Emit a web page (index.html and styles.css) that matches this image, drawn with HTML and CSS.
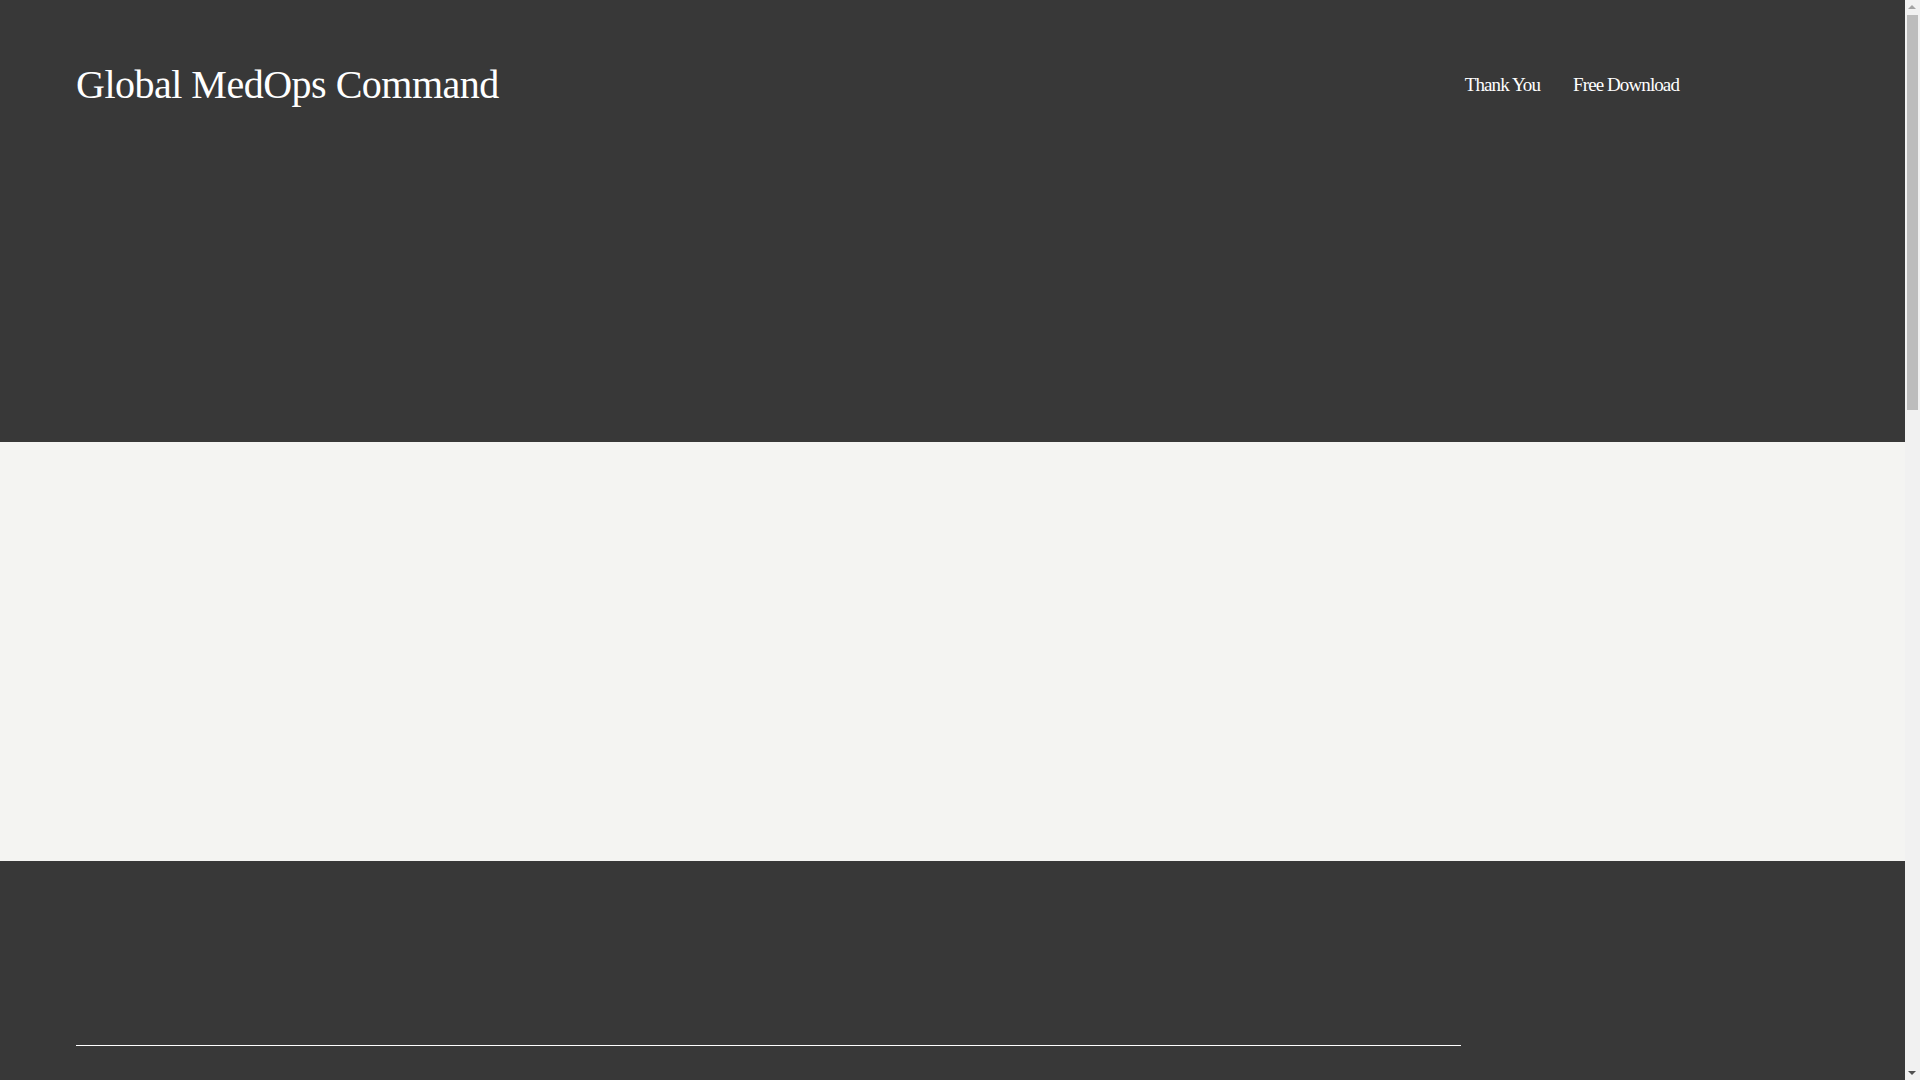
FILE: index.html
```html
<!DOCTYPE html>
<html>
<head>
	<title>Global MedOps Command</title>
	<meta charset="utf-8">
	<link rel="stylesheet" href="styles.css">
</head>
<body>
    <header class="site-header">
        <div class="header-row">
            <a href="#" class="site-title">Global MedOps Command</a>
            <nav class="main-nav">
                <a href="#">Thank You</a>
                <a href="#">Free Download</a>
            </nav>
        </div>
    </header>

    <section class="content-area"></section>

    <footer class="site-footer">
        <div class="footer-inner">
            <hr class="footer-rule">
        </div>
    </footer>

    <!-- page scrollbar as seen in the capture -->
    <div class="fake-scrollbar">
        <span class="arrow-up"></span>
        <div class="thumb"></div>
        <span class="arrow-down"></span>
    </div>
</body>
</html>
```

FILE: styles.css
```css
html, body {
    margin: 0;
    padding: 0;
}
body {
    font-family: "Liberation Serif", "Times New Roman", serif;
    background-color: #383838;
    color: #ffffff;
    margin-right: 15px;
}
.site-header {
    background-color: #383838;
    height: 442px;
    padding: 0 76px;
    box-sizing: border-box;
}
.header-row {
    display: flex;
    align-items: baseline;
    justify-content: space-between;
    padding-top: 61px;
}
.site-title {
    font-size: 40px;
    line-height: 48px;
    color: #ffffff;
    text-decoration: none;
    letter-spacing: -0.5px;
}
.main-nav {
    display: flex;
    gap: 33px;
    margin-right: 150px;
    position: relative;
    top: -7px;
}
.main-nav a {
    font-size: 19px;
    color: #ffffff;
    text-decoration: none;
    letter-spacing: -0.9px;
}
.content-area {
    background-color: #f4f4f2;
    height: 419px;
}
.site-footer {
    background-color: #383838;
    height: 2010px;
    padding: 0 76px;
}
.footer-inner {
    width: 1385px;
    padding-top: 184px;
}
.footer-rule {
    border: 0;
    border-top: 1px solid #ffffff;
    margin: 0;
}
.fake-scrollbar {
    position: fixed;
    top: 0;
    right: 0;
    width: 15px;
    height: 100vh;
    background-color: #f1f1f1;
}
.fake-scrollbar .thumb {
    position: absolute;
    top: 15px;
    left: 2px;
    width: 11px;
    height: 395px;
    background-color: #bcbcbc;
}
.arrow-up, .arrow-down {
    position: absolute;
    left: 3px;
    width: 0;
    height: 0;
    border-left: 4px solid transparent;
    border-right: 4px solid transparent;
}
.arrow-up {
    top: 5px;
    border-bottom: 4px solid #a3a3a3;
}
.arrow-down {
    bottom: 5px;
    border-top: 4px solid #505050;
}
```
